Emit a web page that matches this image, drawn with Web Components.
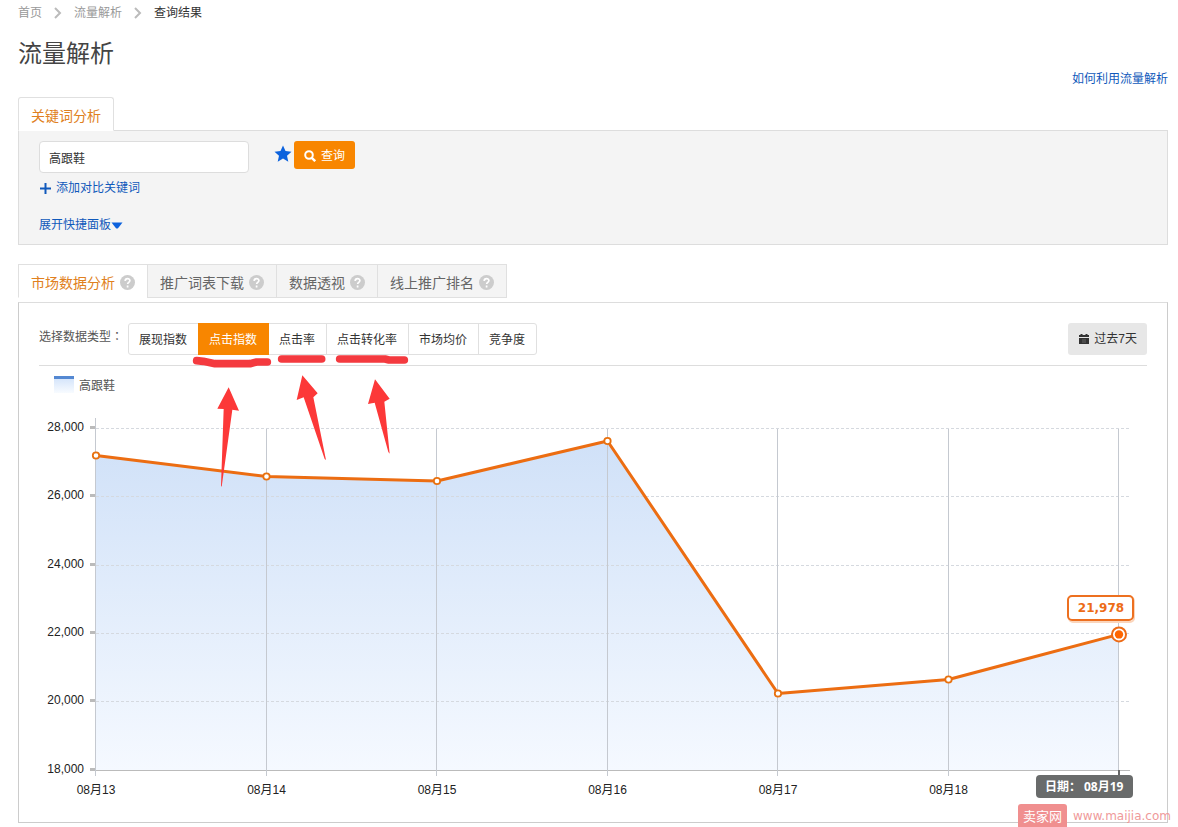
<!DOCTYPE html>
<html lang="zh-CN">
<head>
<meta charset="utf-8">
<title>流量解析</title>
<style>
  body { margin: 0; background: #fff; color: #333; font: 12px/20px "Liberation Sans", "Noto Sans CJK SC", sans-serif; }
</style>
</head>
<body>
<traffic-page></traffic-page>
<script>
const define = (name, html, setup) => customElements.define(name, class extends HTMLElement {
  connectedCallback() {
    if (this.shadowRoot) return;
    const template = document.createElement('template');
    template.innerHTML = html;
    this.attachShadow({ mode: 'open' }).append(template.content.cloneNode(true));
    if (setup) setup(this, this.shadowRoot);
  }
});

define('crumb-trail', `
<style>
  :host { display: block; }
  nav { display: flex; align-items: center; gap: 12px; height: 26px; }
  a { color: #999; text-decoration: none; }
  svg { width: 8px; height: 12px; fill: none; stroke: #bbb; stroke-width: 2; }
</style>
<nav aria-label="位置">
  <a href="#home">首页</a>
  <svg viewBox="0 0 8 12"><path d="M1 1l5 5-5 5"/></svg>
  <a href="#traffic">流量解析</a>
  <svg viewBox="0 0 8 12"><path d="M1 1l5 5-5 5"/></svg>
  <span>查询结果</span>
</nav>`);

define('tab-item', `
<style>
  :host { display: block; }
  button { display: flex; align-items: center; gap: 5px; box-sizing: border-box; height: 34px; padding: 4px 12px 0; margin: 0;
    border: 1px solid #e0e0e0; border-right: 0; background: #f4f4f4; color: #666; font: 14px/20px "Liberation Sans", "Noto Sans CJK SC", sans-serif; white-space: nowrap; }
  :host(:last-of-type) button { border-right: 1px solid #e0e0e0; }
  :host([active]) button { background: #fff; color: #e08020; border-bottom-color: #fff; }
  :host([first]) button { border-radius: 3px 3px 0 0; }
  svg { display: none; width: 15px; height: 15px; margin-bottom: 2px; }
  :host([help]) svg { display: block; }
</style>
<button type="button" role="tab"><slot></slot>
  <svg viewBox="0 0 15 15"><circle cx="7.5" cy="7.5" r="7.5" fill="#ccc"/><path d="M5.2 5.9c0-3 4.7-3 4.7-.3 0 1.8-2.2 1.7-2.2 3.4M7.6 10.6v1.8" fill="none" stroke="#fff" stroke-width="1.7"/></svg>
</button>`);

define('keyword-search', `
<style>
  :host { display: block; border: 1px solid #ddd; background: #f4f4f4; padding: 10px 20px 9px; }
  form { display: flex; align-items: flex-start; height: 32px; }
  input { box-sizing: border-box; width: 210px; height: 32px; margin: 0 25px 0 0; padding: 0 9px; border: 1px solid #ddd; border-radius: 4px; background: #fff; color: #333; font: inherit; outline: 0; }
  .star { width: 18px; height: 18px; margin-top: 4px; fill: #0c62dd; }
  button { display: flex; align-items: center; gap: 5px; height: 28px; margin: 0 0 0 2px; padding: 2px 10px 0; border: 0; border-radius: 3px; background: #f88600; color: #fff; font: inherit; box-sizing: border-box; }
  button svg { width: 12px; height: 12px; fill: none; stroke: #fff; stroke-width: 2; }
  a { display: flex; align-items: center; width: max-content; height: 20px; color: #1059bb; text-decoration: none; }
  .add { gap: 4px; margin: 5px 0 17px; }
  .add svg { width: 13px; height: 13px; }
  .more svg { width: 12px; height: 7px; fill: #0c62dd; }
</style>
<form onsubmit="return false">
  <input type="text" aria-label="关键词" value="高跟鞋">
  <svg class="star" viewBox="0 0 18 18"><path d="M9 .5l2.5 5.6 6 .6-4.5 4 1.3 6L9 13.6l-5.3 3.1 1.3-6-4.5-4 6-.6z"/></svg>
  <button type="submit"><svg viewBox="0 0 12 12"><circle cx="5" cy="5" r="3.8"/><path d="M7.8 7.8l3.4 3.4" stroke-width="2.4"/></svg>查询</button>
</form>
<a class="add" href="#add"><svg viewBox="0 0 13 13"><path d="M6.5 1v11M1 6.5h11" stroke="#1059bb" stroke-width="2"/></svg>添加对比关键词</a>
<a class="more" href="#panel">展开快捷面板<svg viewBox="0 0 12 7"><path d="M.5.5h11L7 6.2q-1 .8-2 0z"/></svg></a>`);

define('type-option', `
<style>
  :host { display: block; }
  button { display: block; height: 30px; margin: 0; padding: 2px 11px 0 10px; border: 0; border-right: 1px solid #e0e0e0; background: none; color: #333; font: inherit; }
  :host([active]) button { height: 32px; margin: -1px 0 -1px -1px; padding: 2px 11px 0; background: #f88600; border-color: #f88600; color: #fff; }
  :host(:last-of-type) button { border-right: 0; }
</style>
<button type="button"><slot></slot></button>`);

define('type-toolbar', `
<style>
  :host { display: flex; align-items: flex-start; margin: 0 20px; padding: 20px 0 10px; border-bottom: 1px solid #ddd; color: #555; }
  .label { width: 89px; height: 26px; line-height: 26px; white-space: nowrap; }
  .group { display: flex; box-sizing: border-box; height: 32px; border: 1px solid #e0e0e0; border-radius: 3px; }
  .range { display: flex; align-items: center; gap: 4px; height: 32px; margin: 0 0 0 auto; padding: 0 10px; border: 0; border-radius: 3px; background: #e7e7e7; color: #333; font: inherit; }
  .range svg { width: 12px; height: 11px; }
</style>
<span class="label">选择数据类型<span lang="zh-TW" style="font-family:'Noto Sans CJK TC',sans-serif">：</span></span>
<div class="group" role="group" aria-label="选择数据类型"><slot></slot></div>
<button class="range" type="button"><svg viewBox="0 0 12 11"><path d="M1 1h1.500V0h2v1h3V0h2v1H11v2H1zM1 4h10v6H1z" fill="#333"/><path d="M4 6h4M4 8h4" stroke="#666"/></svg>过去7天</button>`);

define('trend-chart', `
<style>
  :host { display: block; }
  svg { display: block; width: 100%; height: auto; }
  text { font: 12px "Liberation Sans", "Noto Sans CJK SC", sans-serif; fill: #222; }
  .legend { fill: #555; }
  .value { font: bold 12px "DejaVu Sans", sans-serif; fill: #ed6b16; }
  .date { font: bold 12px "Open Sans", "Noto Sans CJK SC", sans-serif; fill: #fff; }
</style>
<svg viewBox="0 0 1148 456" role="img" aria-label="高跟鞋点击指数">
  <defs>
    <linearGradient id="area" x2="0" y2="1"><stop stop-color="#d0e1f8"/><stop offset="1" stop-color="#f5f9ff"/></linearGradient>
    <linearGradient id="swatch" x2="0" y2="1"><stop stop-color="#cfe1fa"/><stop offset="1" stop-color="#f8fbff"/></linearGradient>
  </defs>
  <path d="M35 10h20v17H35z" fill="url(#swatch)"/><path d="M35 10h20v3H35z" fill="#5488d2"/>
  <text class="legend" x="60" y="24">高跟鞋</text>
  <g id="plot"></g>
</svg>`, (host, root) => {
  const values = [27209, 26594, 26463, 27634, 20240, 20650, 21970];
  const left = 77, step = 170.5, bottom = 404, height = 341.5;
  const y = v => bottom - (v - 18000) / 10000 * height;
  const points = values.map((v, i) => [left + i * step, y(v)]);
  const line = points.map(p => p.join(',')).join(' ');
  const right = points[6][0];
  let out = `<polygon points="${left},${bottom} ${line} ${right},${bottom}" fill="url(#area)"/>`;
  for (let v = 18000; v <= 28000; v += 2000) {
    const row = Math.floor(y(v));
    out += `<path d="M71 ${row - .5}h6" stroke="#bbb" stroke-width="3"/>
      <text x="65" y="${row + 3}" text-anchor="end">${v.toLocaleString('en-US')}</text>`;
    out += v === 18000 ? `<path d="M77 404.5h1034" stroke="#bbb"/>`
      : `<path d="M77 ${row + .5}h1033" stroke="#d5d9df" stroke-dasharray="3 2"/>`;
  }
  points.forEach(([x], i) => {
    const col = i ? Math.floor(x) + (i % 2 ? .5 : -.5) + (i === 6 ? 1 : 0) : 76.5;
    out += `<path d="M${i === 6 ? 1099.5 : col} ${i ? 63 : 52}V410" stroke="#c5c9d0"/>`;
    if (i < 6) out += `<text x="${x}" y="428" text-anchor="middle">08月${13 + i}</text>`;
  });
  out += `<polyline points="${line}" fill="none" stroke="#ec6d12" stroke-width="3" stroke-linejoin="round"/>`;
  points.slice(0, 6).forEach(([x, py]) => {
    out += `<circle cx="${x}" cy="${py}" r="3.2" fill="#fff" stroke="#e8710f" stroke-width="1.8"/>`;
  });
  const end = points[6][1];
  out += `<circle cx="${right}" cy="${end}" r="7" fill="#fff" stroke="#ed6b16" stroke-width="2"/>
    <circle cx="${right}" cy="${end}" r="4.2" fill="#ff6600"/>
    <rect x="1050" y="231" width="65" height="25" rx="4" fill="none" stroke="#fbd5bb" stroke-width="2"/>
    <rect x="1049" y="230" width="65" height="24" rx="4" fill="#fff" stroke="#ed7020" stroke-width="2"/>
    <text class="value" x="1082" y="246" text-anchor="middle">21,978</text>
    <path d="M1100 404v6" stroke="#666" stroke-width="2"/>
    <rect x="1017" y="409" width="97" height="23" rx="4" fill="#696b6b"/>
    <text class="date" x="1026" y="425">日期：<tspan x="1065">08月19</tspan></text>`;
  root.getElementById('plot').innerHTML = out;
});

define('marker-notes', `
<style>
  :host { position: absolute; left: 161px; top: 37px; pointer-events: none; }
  svg { display: block; width: 240px; height: 160px; }
</style>
<svg viewBox="0 0 720 480" fill="#fc3838">
  <g fill="none" stroke="#f43a3f" stroke-width="23" stroke-linecap="round" stroke-linejoin="round">
    <path d="M50 62l20 2 35 7h105l20-5h32M305 57h120M479 57h136l12 3h46"/>
  </g>
  <path d="M146 142l31 70-20-3-32 231-2-2 8-231-19-1z"/>
  <path d="M367 106l46 54-13 12 38 188-4-3-63-185-21 8z"/>
  <path d="M585 118l44 58-16 9 16 156-4-5-41-148-20 4z"/>
</svg>`);

define('market-panel', `
<style>
  :host { display: block; position: relative; margin-top: 4px; border: 1px solid #ccc; border-top-color: #ddd; }
</style>
<slot></slot>`);

define('site-mark', `
<style>
  :host { display: flex; align-items: center; gap: 6px; position: absolute; right: 7px; bottom: 0; height: 23px; color: #ef9a9a; white-space: nowrap; }
  b { display: block; height: 23px; padding: 0 5px; border-radius: 3px 3px 0 0; background: #f08f8f; color: #fff; font: 13px/23px "Noto Sans CJK SC", sans-serif; }
  span { font: 12px/20px "DejaVu Sans", sans-serif; }
</style>
<b>卖家网</b><span>www.maijia.com</span>`);

define('traffic-page', `
<style>
  :host { display: block; position: relative; padding: 0 10px 4px 18px; }
  h1 { margin: 12px 0 0; color: #444; font-size: 24px; line-height: 32px; font-weight: 400; }
  .guide { display: flex; justify-content: flex-end; height: 18px; line-height: 18px; margin-bottom: 9px; }
  .guide a { color: #1059bb; text-decoration: none; }
  .tabs { display: flex; }
  .top { position: relative; margin-bottom: -1px; }
  .lower { margin-top: 19px; }
</style>
<crumb-trail></crumb-trail>
<h1>流量解析</h1>
<div class="guide"><a href="#guide">如何利用流量解析</a></div>
<div class="tabs top" role="tablist"><tab-item active first>关键词分析</tab-item></div>
<keyword-search></keyword-search>
<div class="tabs lower" role="tablist">
  <tab-item active help>市场数据分析</tab-item>
  <tab-item help>推广词表下载</tab-item>
  <tab-item help>数据透视</tab-item>
  <tab-item help>线上推广排名</tab-item>
</div>
<market-panel>
  <type-toolbar>
    <type-option>展现指数</type-option>
    <type-option active>点击指数</type-option>
    <type-option>点击率</type-option>
    <type-option>点击转化率</type-option>
    <type-option>市场均价</type-option>
    <type-option>竞争度</type-option>
  </type-toolbar>
  <trend-chart></trend-chart>
  <marker-notes></marker-notes>
</market-panel>
<site-mark></site-mark>`);
</script>
</body>
</html>
